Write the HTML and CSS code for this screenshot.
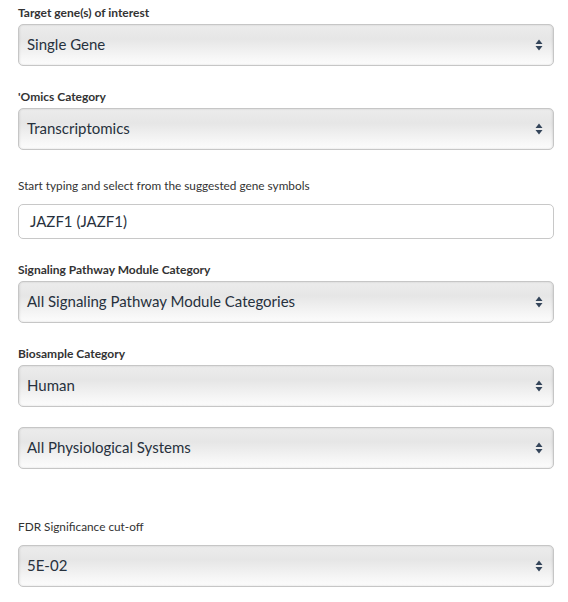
FILE: index.html
```html
<!DOCTYPE html>
<html>
<head>
<meta charset="utf-8">
<link rel="stylesheet" href="styles.css">
</head>
<body>
<form class="form">
  <div class="group g1">
    <div class="label bold">Target gene(s) of interest</div>
    <div class="select"><span>Single Gene</span><svg class="arrows" width="8" height="12" viewBox="0 0 8 12"><path d="M4 0.5L7.5 5H0.5Z M4 11.5L7.5 7H0.5Z"/></svg></div>
  </div>
  <div class="group g2">
    <div class="label bold">'Omics Category</div>
    <div class="select"><span>Transcriptomics</span><svg class="arrows" width="8" height="12" viewBox="0 0 8 12"><path d="M4 0.5L7.5 5H0.5Z M4 11.5L7.5 7H0.5Z"/></svg></div>
  </div>
  <div class="group g3">
    <div class="label">Start typing and select from the suggested gene symbols</div>
    <div class="input">JAZF1 (JAZF1)</div>
  </div>
  <div class="group g4">
    <div class="label bold">Signaling Pathway Module Category</div>
    <div class="select"><span>All Signaling Pathway Module Categories</span><svg class="arrows" width="8" height="12" viewBox="0 0 8 12"><path d="M4 0.5L7.5 5H0.5Z M4 11.5L7.5 7H0.5Z"/></svg></div>
  </div>
  <div class="group g5">
    <div class="label bold">Biosample Category</div>
    <div class="select"><span>Human</span><svg class="arrows" width="8" height="12" viewBox="0 0 8 12"><path d="M4 0.5L7.5 5H0.5Z M4 11.5L7.5 7H0.5Z"/></svg></div>
    <div class="select s6"><span>All Physiological Systems</span><svg class="arrows" width="8" height="12" viewBox="0 0 8 12"><path d="M4 0.5L7.5 5H0.5Z M4 11.5L7.5 7H0.5Z"/></svg></div>
  </div>
  <div class="group g7">
    <div class="label">FDR Significance cut-off</div>
    <div class="select"><span>5E-02</span><svg class="arrows" width="8" height="12" viewBox="0 0 8 12"><path d="M4 0.5L7.5 5H0.5Z M4 11.5L7.5 7H0.5Z"/></svg></div>
  </div>
</form>
</body>
</html>
```
FILE: styles.css
```css
html, body {
  margin: 0;
  padding: 0;
  background: #fff;
}
body {
  font-family: Lato, "Open Sans", sans-serif;
  color: #333;
}
.form {
  display: flex;
  flex-direction: column;
  padding: 5px 14px 0 18px;
  width: 536px;
}
.group {
  display: flex;
  flex-direction: column;
}
.label {
  font-size: 11.8px;
  line-height: 16px;
  height: 16px;
  color: #333;
  margin-bottom: 3px;
}
.label.bold {
  font-size: 12px;
  font-weight: 700;
}
.g2 { margin-top: 23px; }
.g3 { margin-top: 28px; }
.g3 .label { margin-bottom: 10px; }
.g4 { margin-top: 23px; }
.g5 { margin-top: 23px; }
.g7 { margin-top: 50px; }
.g7 .label { margin-bottom: 10px; }
.s6 { margin-top: 20px; }
.select {
  box-sizing: border-box;
  height: 42px;
  display: flex;
  align-items: center;
  justify-content: space-between;
  padding: 0 8px 2px 8px;
  border: 1px solid #c6c6c6;
  border-radius: 5px;
  background: linear-gradient(#ececec 0%, #e6e6e6 35%, #f6f6f6 80%, #fcfcfc 100%);
  box-shadow: inset 1px 0 2px rgba(0,0,0,0.08), inset -1px 0 2px rgba(0,0,0,0.08);
  font-size: 15px;
  color: #27313d;
}
.arrows {
  fill: #34455a;
  margin-right: 2px;
  margin-top: 2px;
}
.input {
  box-sizing: border-box;
  height: 35px;
  display: flex;
  align-items: center;
  padding: 0 11px 1px;
  border: 1px solid #c8c8c8;
  border-radius: 5px;
  background: #fff;
  font-size: 15px;
  color: #27313d;
}
```
